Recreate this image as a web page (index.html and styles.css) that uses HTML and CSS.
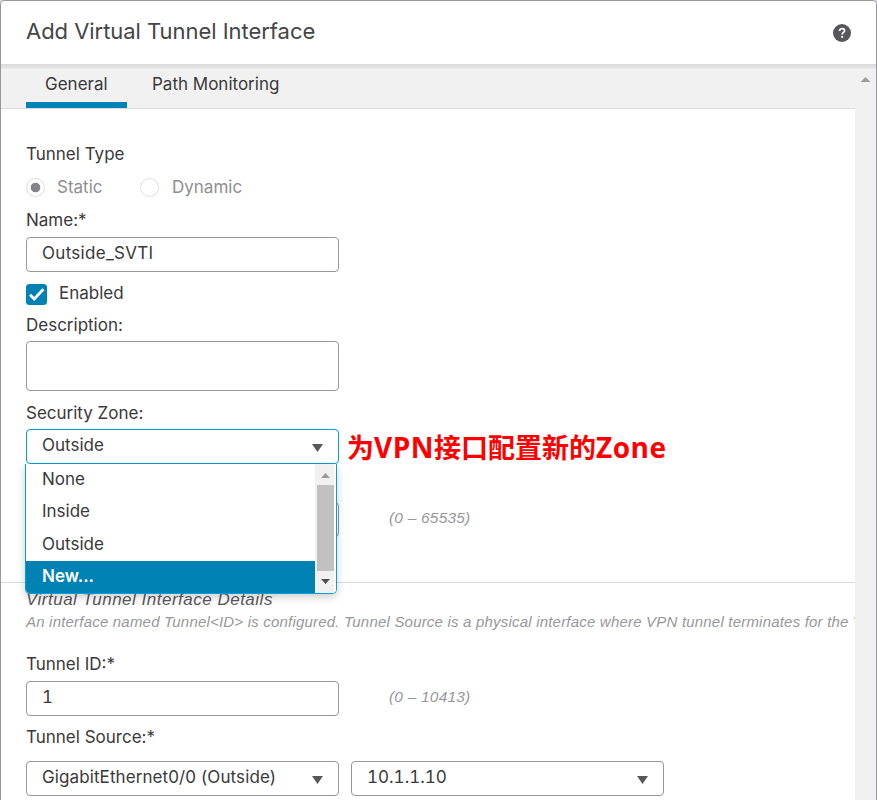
FILE: index.html
```html
<!DOCTYPE html>
<html lang="en">
<head>
<meta charset="utf-8">
<title>Add Virtual Tunnel Interface</title>
<link rel="stylesheet" href="styles.css">
</head>
<body>
<div class="dialog">
  <header class="header">
    <h1 class="title">Add Virtual Tunnel Interface</h1>
    <svg class="help" viewBox="0 0 18 18"><circle cx="9" cy="9" r="9" fill="#58585b"/><path d="M6.5 7.1C6.5 5.5 7.5 4.6 9.1 4.6c1.5 0 2.5.8 2.5 2.1 0 1.7-2.4 1.8-2.4 3.7" fill="none" stroke="#fff" stroke-width="1.7"/><rect x="8.2" y="11.9" width="1.9" height="1.9" fill="#fff"/></svg>
  </header>
  <div class="body">
    <main class="main">
      <nav class="tabs">
        <div class="tab active">General</div>
        <div class="tab">Path Monitoring</div>
      </nav>
      <form class="form">
        <div class="label">Tunnel Type</div>
        <div class="radios">
          <i class="radio on"></i><span class="static">Static</span>
          <i class="radio"></i><span class="dynamic">Dynamic</span>
        </div>
        <div class="label name">Name:*</div>
        <div class="field svti">Outside_SVTI</div>
        <div class="check">
          <svg class="box" viewBox="0 0 21 21"><rect width="21" height="21" rx="3.5" fill="#0082b5"/><path d="M4 10.7l4.2 4.2L17.4 5.3" fill="none" stroke="#fff" stroke-width="2.8"/></svg>
          <span class="enabled">Enabled</span>
        </div>
        <div class="label desc">Description:</div>
        <div class="field area"></div>
        <div class="label zone">Security Zone:</div>
        <div class="zone-row">
          <div class="field select open"><span>Outside</span><i class="caret"></i>
            <div class="menu">
              <ul class="options">
                <li>None</li>
                <li>Inside</li>
                <li>Outside</li>
                <li class="picked">New...</li>
              </ul>
              <div class="menu-bar"><i class="up"></i><i class="thumb"></i><i class="down"></i></div>
            </div>
          </div>
          <strong class="note">为<span class="latin">VPN</span>接口配置新的<span class="latin">Zone</span></strong>
        </div>
        <div class="row priority"><div class="field"></div><em class="range">(0 – 65535)</em></div>
        <hr class="rule">
        <div class="section">Virtual Tunnel Interface Details</div>
        <div class="info">An interface named Tunnel&lt;ID&gt; is configured. Tunnel Source is a physical interface where VPN tunnel terminates for the VTI.</div>
        <div class="label id">Tunnel ID:*</div>
        <div class="row"><div class="field num">1</div><em class="range">(0 – 10413)</em></div>
        <div class="label source">Tunnel Source:*</div>
        <div class="row sources">
          <div class="field select gig"><span>GigabitEthernet0/0 (Outside)</span><i class="caret"></i></div>
          <div class="field select num"><span>10.1.1.10</span><i class="caret"></i></div>
        </div>
      </form>
    </main>
    <aside class="scroll"><i class="up"></i></aside>
  </div>
</div>
</body>
</html>
```
FILE: styles.css
```css
* { box-sizing: border-box; }
body { margin: 0; background: #d8d8da; font-family: Inter, "Liberation Sans", sans-serif; font-size: 17px; line-height: 22px; color: #39393b; }
.dialog { height: 800px; overflow: hidden; display: flex; flex-direction: column; background: #fff; border: 1px solid #97979b; border-bottom: 0; border-radius: 5px 5px 0 0; }
.header { height: 63px; flex: none; display: flex; justify-content: space-between; padding: 16px 25px 0 25px; background: #fff; }
.title { margin: 0; font-size: 22px; line-height: 28px; font-weight: 400; letter-spacing: -.04px; color: #454547; white-space: nowrap; }
.help { width: 18px; height: 18px; margin-top: 7px; }
.body { flex: 1; display: flex; min-height: 0; background: linear-gradient(#d9d9d9, #e4e4e4 4px, #f1f1f1 5px); }
.main { width: 854px; overflow: hidden; }
.tabs { height: 45px; display: flex; padding-left: 25px; border-bottom: 1px solid #dcdcde; }
.tab { height: 44px; padding: 9px 19px 0; margin-right: 6px; white-space: nowrap; }
.active { width: 101px; border-bottom: 6px solid #0082b5; }
.form { height: 700px; padding: 34px 0 0 25px; background: #fff; white-space: nowrap; }
.label, .section, .info { height: 22px; }
.radios { display: flex; align-items: center; height: 22px; margin-top: 11px; color: #8e8e91; }
.radio { width: 19px; height: 19px; border: 1px solid #dedee0; border-radius: 50%; }
.on { background: radial-gradient(circle, #858588 4.4px, transparent 5.2px); }
.static { width: 95px; padding-left: 12px; }
.dynamic { padding-left: 13px; }
.name { margin-top: 11px; margin-bottom: 6px; }
.field { width: 313px; height: 35px; flex: none; padding: 4px 15px; border: 1px solid #97979b; border-radius: 4px; background: #fff; }
.svti { letter-spacing: .3px; }
.gig { letter-spacing: .1px; }
.num { font-variant-numeric: tabular-nums; }
.check { display: flex; align-items: center; height: 22px; margin-top: 11px; }
.box { width: 21px; height: 21px; margin-right: 12px; }
.enabled { padding-bottom: 2px; }
.desc { margin: 9px 0 5px; }
.area { height: 50px; }
.zone { margin: 11px 0 5px; }
.zone-row, .row { display: flex; }
.zone-row { height: 35px; }
.select { display: flex; justify-content: space-between; }
.caret { width: 11px; height: 8px; margin-top: 10px; background: #58585b; clip-path: polygon(0 0, 100% 0, 50% 100%); }
.open { position: relative; border-color: #049fd9; }
.menu { position: absolute; z-index: 2; top: 34px; left: -2px; width: 312px; height: 130px; display: flex; overflow: hidden; border: 1px solid #049fd9; border-top: 0; border-radius: 0 0 5px 5px; background: #fff; box-shadow: 0 3px 8px rgba(0,0,0,.2); }
.options { width: 289px; flex: none; margin: 0; padding: 0; list-style: none; }
.options li { height: 32.4px; padding: 4px 0 0 16px; }
.options .picked { background: #0082b5; color: #fff; font-weight: 600; }
.menu-bar { flex: 1; display: flex; flex-direction: column; background: linear-gradient(90deg, #f1f1f1 19px, #fff 19px); padding-left: 2px; }
.up, .down { width: 9px; height: 5px; background: #9c9c9c; clip-path: polygon(50% 0, 100% 100%, 0 100%); }
.menu-bar .up { margin: 9px 0 7px 4px; }
.thumb { width: 17px; height: 86px; background: #c1c1c1; }
.down { margin: 8px 0 0 4px; background: #505050; clip-path: polygon(0 0, 100% 0, 50% 100%); }
.note { margin-left: 8px; font: 700 27px/36px "Open Sans", "Noto Sans CJK SC", sans-serif; color: #f00; }
.latin { font-size: 28px; letter-spacing: .5px; }
.priority { margin-top: 38px; }
.range { margin: 5px 0 0 50px; font: italic 15.5px/22px "Liberation Sans", sans-serif; letter-spacing: .2px; color: #97979b; }
.rule { height: 1px; margin: 45px 0 6px -25px; border: 0; background: #dcdcde; }
.section { font: italic 17px/22px "Liberation Sans", sans-serif; letter-spacing: .5px; color: #58585b; }
.info { font: italic 15px/22px "Liberation Sans", sans-serif; letter-spacing: .2px; color: #97979b; }
.id { margin: 20px 0 6px; }
.source { margin: 10px 0 13px; }
.sources { gap: 12px; }
.scroll { flex: 1; display: flex; justify-content: center; padding-top: 13px; }
.scroll .up { width: 10px; }
```
